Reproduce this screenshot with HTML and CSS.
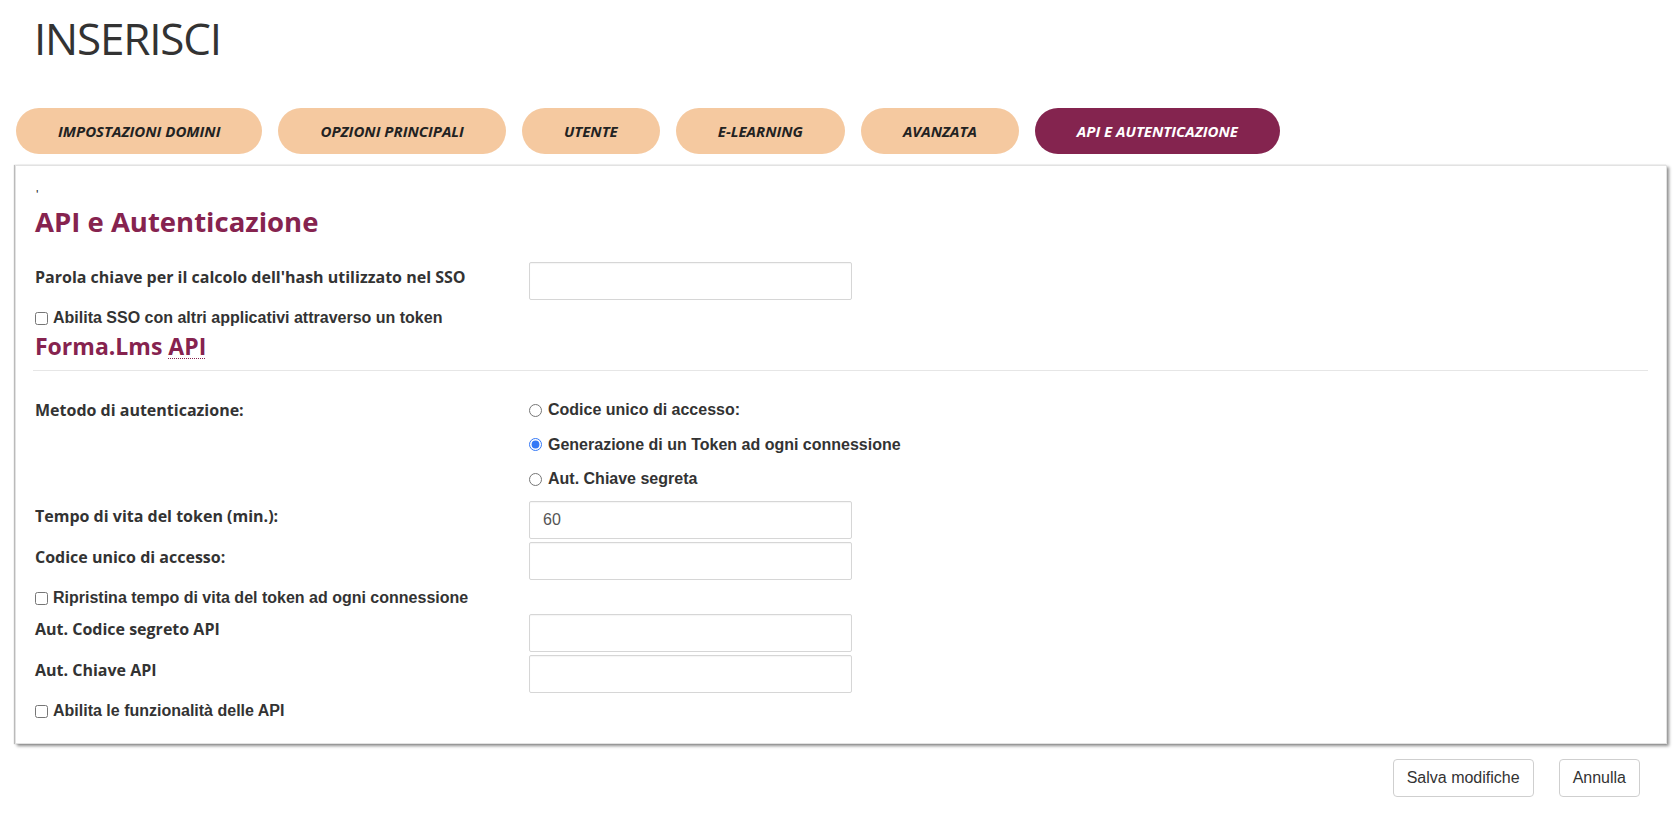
FILE: index.html
```html
<!DOCTYPE html>
<html lang="it">
<head>
<meta charset="utf-8">
<title>Inserisci</title>
<link rel="stylesheet" href="styles.css">
</head>
<body>
<div class="page">
  <h1 class="page-title">INSERISCI</h1>
  <nav class="tabs">
    <a class="tab">IMPOSTAZIONI DOMINI</a>
    <a class="tab">OPZIONI PRINCIPALI</a>
    <a class="tab">UTENTE</a>
    <a class="tab">E-LEARNING</a>
    <a class="tab">AVANZATA</a>
    <a class="tab tab-active">API E AUTENTICAZIONE</a>
  </nav>
  <section class="panel">
    <div class="tick">'</div>
    <h2 class="section-title">API e Autenticazione</h2>
    <div class="row row-input row-first">
      <label class="label">Parola chiave per il calcolo dell'hash utilizzato nel SSO</label>
      <input class="text-input" type="text">
    </div>
    <label class="check check-first"><input type="checkbox"><span>Abilita SSO con altri applicativi attraverso un token</span></label>
    <h3 class="sub-title">Forma.Lms <abbr title="Application Programming Interface">API</abbr></h3>
    <hr class="sep">
    <div class="row row-radio">
      <div class="label">Metodo di autenticazione:</div>
      <div class="radios">
        <label class="radio"><input type="radio" name="auth"><span>Codice unico di accesso:</span></label>
        <label class="radio"><input type="radio" name="auth" checked><span>Generazione di un Token ad ogni connessione</span></label>
        <label class="radio"><input type="radio" name="auth"><span>Aut. Chiave segreta</span></label>
      </div>
    </div>
    <div class="row row-input row-after-radio">
      <label class="label">Tempo di vita del token (min.):</label>
      <input class="text-input" type="text" value="60">
    </div>
    <div class="row row-input row-tight">
      <label class="label">Codice unico di accesso:</label>
      <input class="text-input" type="text">
    </div>
    <label class="check check-mid"><input type="checkbox"><span>Ripristina tempo di vita del token ad ogni connessione</span></label>
    <div class="row row-input row-after-check">
      <label class="label">Aut. Codice segreto API</label>
      <input class="text-input" type="text">
    </div>
    <div class="row row-input row-tight">
      <label class="label">Aut. Chiave API</label>
      <input class="text-input" type="text">
    </div>
    <label class="check check-mid"><input type="checkbox"><span>Abilita le funzionalità delle API</span></label>
  </section>
  <div class="actions">
    <button class="btn" type="button">Salva modifiche</button>
    <button class="btn" type="button">Annulla</button>
  </div>
</div>
</body>
</html>
```
FILE: styles.css
```css
* { box-sizing: border-box; }
html, body { margin: 0; padding: 0; background: #fff; }
body {
  font-family: "Open Sans", "Liberation Sans", sans-serif;
  color: #333;
}
.page { padding: 0 13px 0 15px; }

.page-title {
  margin: 0;
  padding: 8px 0 0 19px;
  font-family: "Open Sans", sans-serif;
  font-weight: 400;
  font-size: 44px;
  line-height: 61px;
  color: #333;
  letter-spacing: -1.2px;
}

.tabs {
  display: flex;
  gap: 16px;
  margin: 39px 0 0 1px;
}
.tab {
  display: flex;
  align-items: center;
  justify-content: center;
  height: 46px;
  padding: 0 42px;
  border-radius: 23px;
  background: #f5c9a0;
  color: #222;
  font-family: "Open Sans", sans-serif;
  font-style: italic;
  font-weight: 700;
  font-size: 15px;
  white-space: nowrap;
}
.tab-active {
  background: #84244f;
  color: #fff;
}

.panel {
  margin-top: 11px;
  border: 1px solid #e2e2e2;
  box-shadow: 2px 2px 3px rgba(0,0,0,0.45), -1px 0 1px rgba(0,0,0,0.25);
  padding: 0 18px 22px 19px;
  background: #fff;
}
.tick {
  height: 37px;
  padding-top: 24px;
  font-family: "Liberation Sans", Arial, sans-serif;
  font-size: 13px;
  line-height: 10px;
  color: #333;
  padding-left: 1px;
}
.section-title {
  margin: 0;
  font-family: "Open Sans", sans-serif;
  font-weight: 700;
  font-size: 27.5px;
  line-height: 38px;
  color: #86234f;
}
.sub-title {
  margin: 3px 0 0;
  font-family: "Open Sans", sans-serif;
  font-weight: 700;
  font-size: 23px;
  line-height: 30px;
  color: #86234f;
}
.sub-title abbr {
  text-decoration: underline dotted;
  text-underline-offset: 3px;
  text-decoration-thickness: 1px;
}
.sep {
  margin: 9px 0 0 -2px;
  border: 0;
  border-top: 1px solid #e6e6e6;
  height: 0;
}

.row {
  display: flex;
  align-items: flex-start;
}
.label {
  width: 494px;
  flex: none;
  font-family: "Open Sans", sans-serif;
  font-weight: 700;
  font-size: 16px;
  line-height: 20px;
  color: #333;
}
.row-input .label { padding-top: 5px; }
.row-first { margin-top: 21px; }
.row-tight { margin-top: 3px; }
.row-after-radio { margin-top: 12px; }
.row-after-check { margin-top: 6px; }
.row-radio { margin-top: 29px; }

.text-input {
  width: 323px;
  height: 38px;
  margin: 0;
  border: 1px solid #d6d6d6;
  border-radius: 2px;
  padding: 0 13px;
  font-family: "Liberation Sans", Arial, sans-serif;
  font-size: 16px;
  color: #555;
  box-shadow: inset 0 1px 1px rgba(0,0,0,0.04);
}

.radios {
  display: flex;
  flex-direction: column;
  gap: 14.5px;
}
.radio, .check {
  display: flex;
  align-items: center;
  height: 20px;
  font-family: "Liberation Sans", Arial, sans-serif;
  font-weight: 700;
  font-size: 16px;
  color: #333;
}
.radio input {
  width: 13px;
  height: 13px;
  margin: 0 6px 0 0;
  accent-color: #3478f6;
}
.check input {
  width: 13px;
  height: 13px;
  margin: 0 5px 0 0;
}
.check-first { margin-top: 8px; }
.check-mid { margin-top: 8px; }

.actions {
  display: flex;
  justify-content: flex-end;
  gap: 25px;
  margin: 15px 27px 0 0;
}
.btn {
  height: 38px;
  padding: 0 13px;
  border: 1px solid #cfcfcf;
  border-radius: 4px;
  background: #fff;
  font-family: "Liberation Sans", Arial, sans-serif;
  font-size: 16px;
  color: #333;
}
```
